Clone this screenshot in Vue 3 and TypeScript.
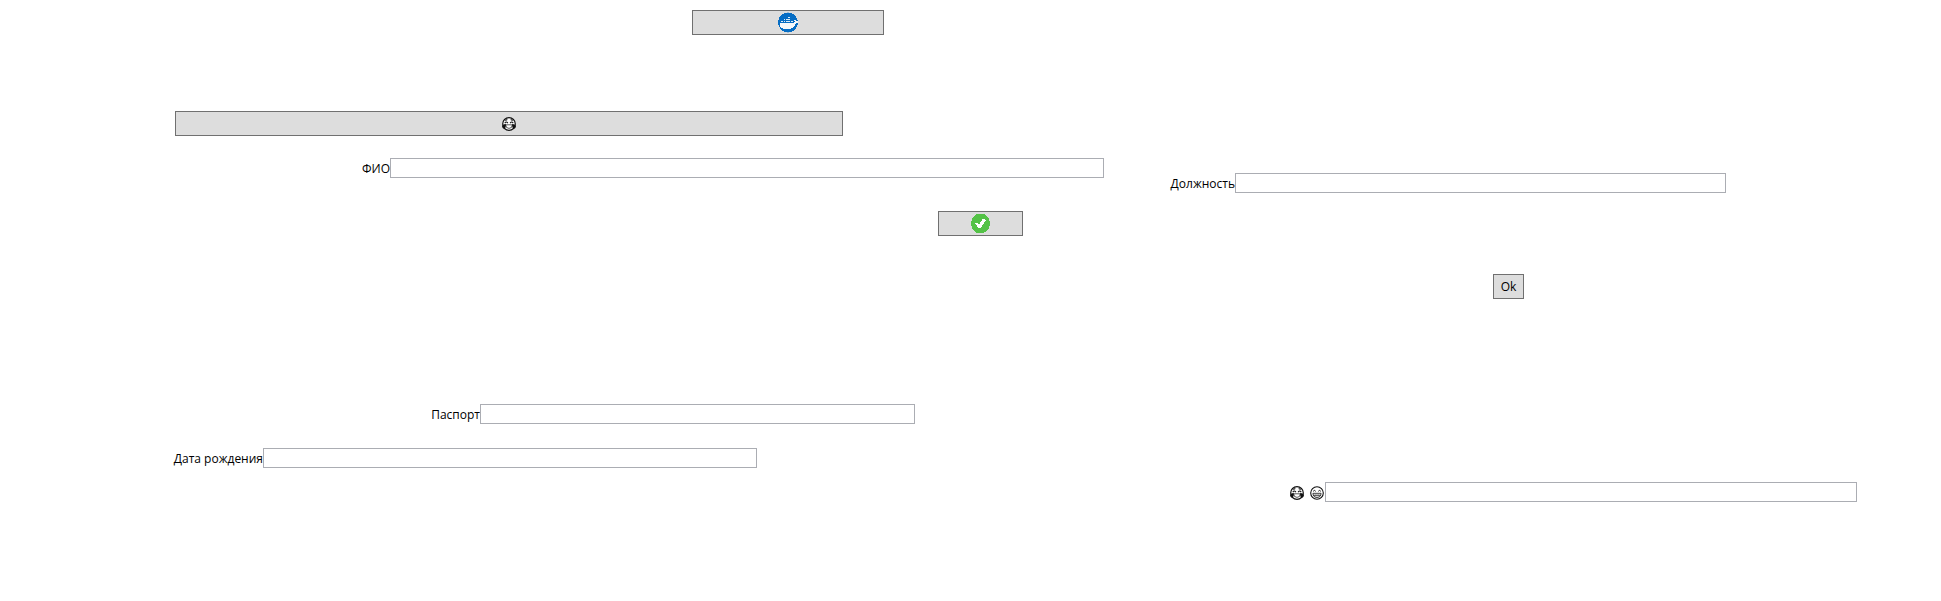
<script setup lang="ts">
import { ref } from 'vue'

const fullName = ref('')
const position = ref('')
const passport = ref('')
const birthDate = ref('')
const mood = ref('')
</script>

<template>
  <main class="form">
    <section class="column primary">
      <div class="row docker">
        <button type="button" aria-label="Docker">
          <svg class="badge" viewBox="0 0 20 21" shape-rendering="crispEdges" aria-hidden="true">
            <ellipse cx="10" cy="10.5" rx="10" ry="10" fill="#066dc4" />
            <path d="M9 0h2v1H9zM9 20h2v1H9z" fill="#9fbfda" />
            <path d="M2 11h14v-1h1V9h-1V8h2v1h2v2h-2v1h-1v2h-1v1h-1v1h-2v1H5v-1H3v-1H2z" fill="#f4f7fa" />
            <path d="M3 9h2v1H3zM6 9h1v1H6zM8 9h4v1H8zM13 9h2v1h-2zM6 7h1v1H6zM8 7h4v1H8zM10 5h2v1h-2z" fill="#dcebf7" />
          </svg>
        </button>
      </div>

      <div class="row laugh">
        <button type="button" aria-label="Смех до слёз">
          <svg class="emoji" viewBox="0 0 14 14" aria-hidden="true">
            <use href="#face-tears" />
          </svg>
        </button>
      </div>

      <div class="row full-name">
        <label for="full-name">ФИО</label>
        <input id="full-name" v-model="fullName" type="text" />
      </div>

      <div class="row confirm">
        <button type="button" aria-label="Подтвердить">
          <svg class="badge" viewBox="0 0 20 21" shape-rendering="crispEdges" aria-hidden="true">
            <ellipse cx="9.5" cy="10.5" rx="9.5" ry="10" fill="#54c247" />
            <path d="M4 10.5L6 9.5L8 11.7L12 5.500L15 7L9.500 15H7.500z" fill="#fff" />
          </svg>
        </button>
      </div>

      <div class="row passport">
        <label for="passport">Паспорт</label>
        <input id="passport" v-model="passport" type="text" />
      </div>

      <div class="row birth-date">
        <label for="birth-date">Дата рождения</label>
        <input id="birth-date" v-model="birthDate" type="text" />
      </div>
    </section>

    <section class="column secondary">
      <div class="row position">
        <label for="position">Должность</label>
        <input id="position" v-model="position" type="text" />
      </div>

      <div class="row accept">
        <button type="button">Ok</button>
      </div>

      <div class="row mood">
        <label for="mood" class="faces" aria-label="Настроение">
          <svg class="emoji" viewBox="0 0 14 14" aria-hidden="true">
            <g id="face-tears">
              <circle cx="7" cy="7" r="6.3" fill="#fff" stroke="#111" stroke-width="1.2" />
              <path d="M3.3 3.4L5.3 2.6M8.7 2.6L10.7 3.4M2.800 6.100Q4.200 4 5.900 6.100M8.100 6.100Q9.800 4 11.200 6.100" fill="none" stroke="#111" stroke-width="1.1" />
              <path d="M3.600 7.800H10.400Q10.100 11.400 7 11.400T3.600 7.800Z" fill="#fff" stroke="#111" stroke-width=".7" />
              <path d="M3.800 7Q.2 7.200 .1 9.600Q.4 12 2.500 11.600Q4.300 10.600 3.800 7ZM10.200 7Q13.800 7.200 13.900 9.600Q13.600 12 11.500 11.600Q9.700 10.600 10.200 7Z" fill="#111" />
            </g>
          </svg>
          <svg class="emoji" viewBox="0 0 14 14" aria-hidden="true">
            <circle cx="7" cy="7" r="6.3" fill="#fff" stroke="#111" stroke-width="1.1" />
            <path d="M3.200 5.300Q4.400 3.500 5.700 5.300M8.300 5.300Q9.600 3.500 10.800 5.300" fill="none" stroke="#111" />
            <path d="M2.900 7.300H11.100Q10.800 11.500 7 11.500T2.900 7.300ZM3.400 9.300H10.600" fill="none" stroke="#111" stroke-width=".8" />
            <path d="M5.300 7.300V11M7 7.300V11.500M8.700 7.300V11" fill="none" stroke="#555" stroke-width=".4" />
          </svg>
        </label>
        <input id="mood" v-model="mood" type="text" />
      </div>
    </section>
  </main>
</template>

<style>
body {
  background: #fff;
}
</style>

<style scoped>
.form {
  display: grid;
  grid-template-columns: minmax(0, 1134fr) minmax(0, 807fr);
  color: #000;
  font: 12px/16px "Segoe UI", "Open Sans", "Noto Sans", sans-serif;
}

.column {
  display: flex;
  flex-direction: column;
}

.primary {
  padding-top: 10px;
}

.secondary {
  padding-top: 173px;
}

.row {
  --before: 1fr;
  --field: 1fr;
  --after: 1fr;
  display: grid;
  grid-template-columns: minmax(0, var(--before)) minmax(0, var(--field)) minmax(0, var(--after));
  align-items: center;
}

.docker { --before: 692fr; --field: 192fr; --after: 250fr; }
.laugh { --before: 175fr; --field: 668fr; --after: 291fr; margin-top: 76px; }
.full-name { --before: 390fr; --field: 714fr; --after: 30fr; margin-top: 22px; }
.confirm { --before: 938fr; --field: 85fr; --after: 111fr; margin-top: 33px; }
.passport { --before: 480fr; --field: 435fr; --after: 219fr; margin-top: 168px; }
.birth-date { --before: 263fr; --field: 494fr; --after: 377fr; margin-top: 24px; }
.position { --before: 101fr; --field: 491fr; --after: 215fr; }
.accept { --before: 359fr; --field: 31fr; --after: 417fr; margin-top: 81px; }
.mood { --before: 191fr; --field: 532fr; --after: 84fr; margin-top: 183px; }

label {
  justify-self: end;
  padding-top: 2px;
  white-space: nowrap;
}

button,
input {
  grid-column: 2;
  box-sizing: border-box;
  width: 100%;
  margin: 0;
  border-radius: 0;
  color: inherit;
  font: inherit;
}

button {
  display: flex;
  align-items: center;
  justify-content: center;
  height: 25px;
  padding: 0;
  border: 1px solid #707070;
  background: #ddd;
}

input {
  height: 20px;
  padding: 0 2px;
  border: 1px solid #abadb3;
  background: #fff;
}

.badge {
  width: 20px;
  height: 21px;
}

.emoji {
  display: block;
  width: 14px;
  height: 14px;
}

.faces {
  display: flex;
  gap: 6px;
  padding-right: 1px;
}
</style>
